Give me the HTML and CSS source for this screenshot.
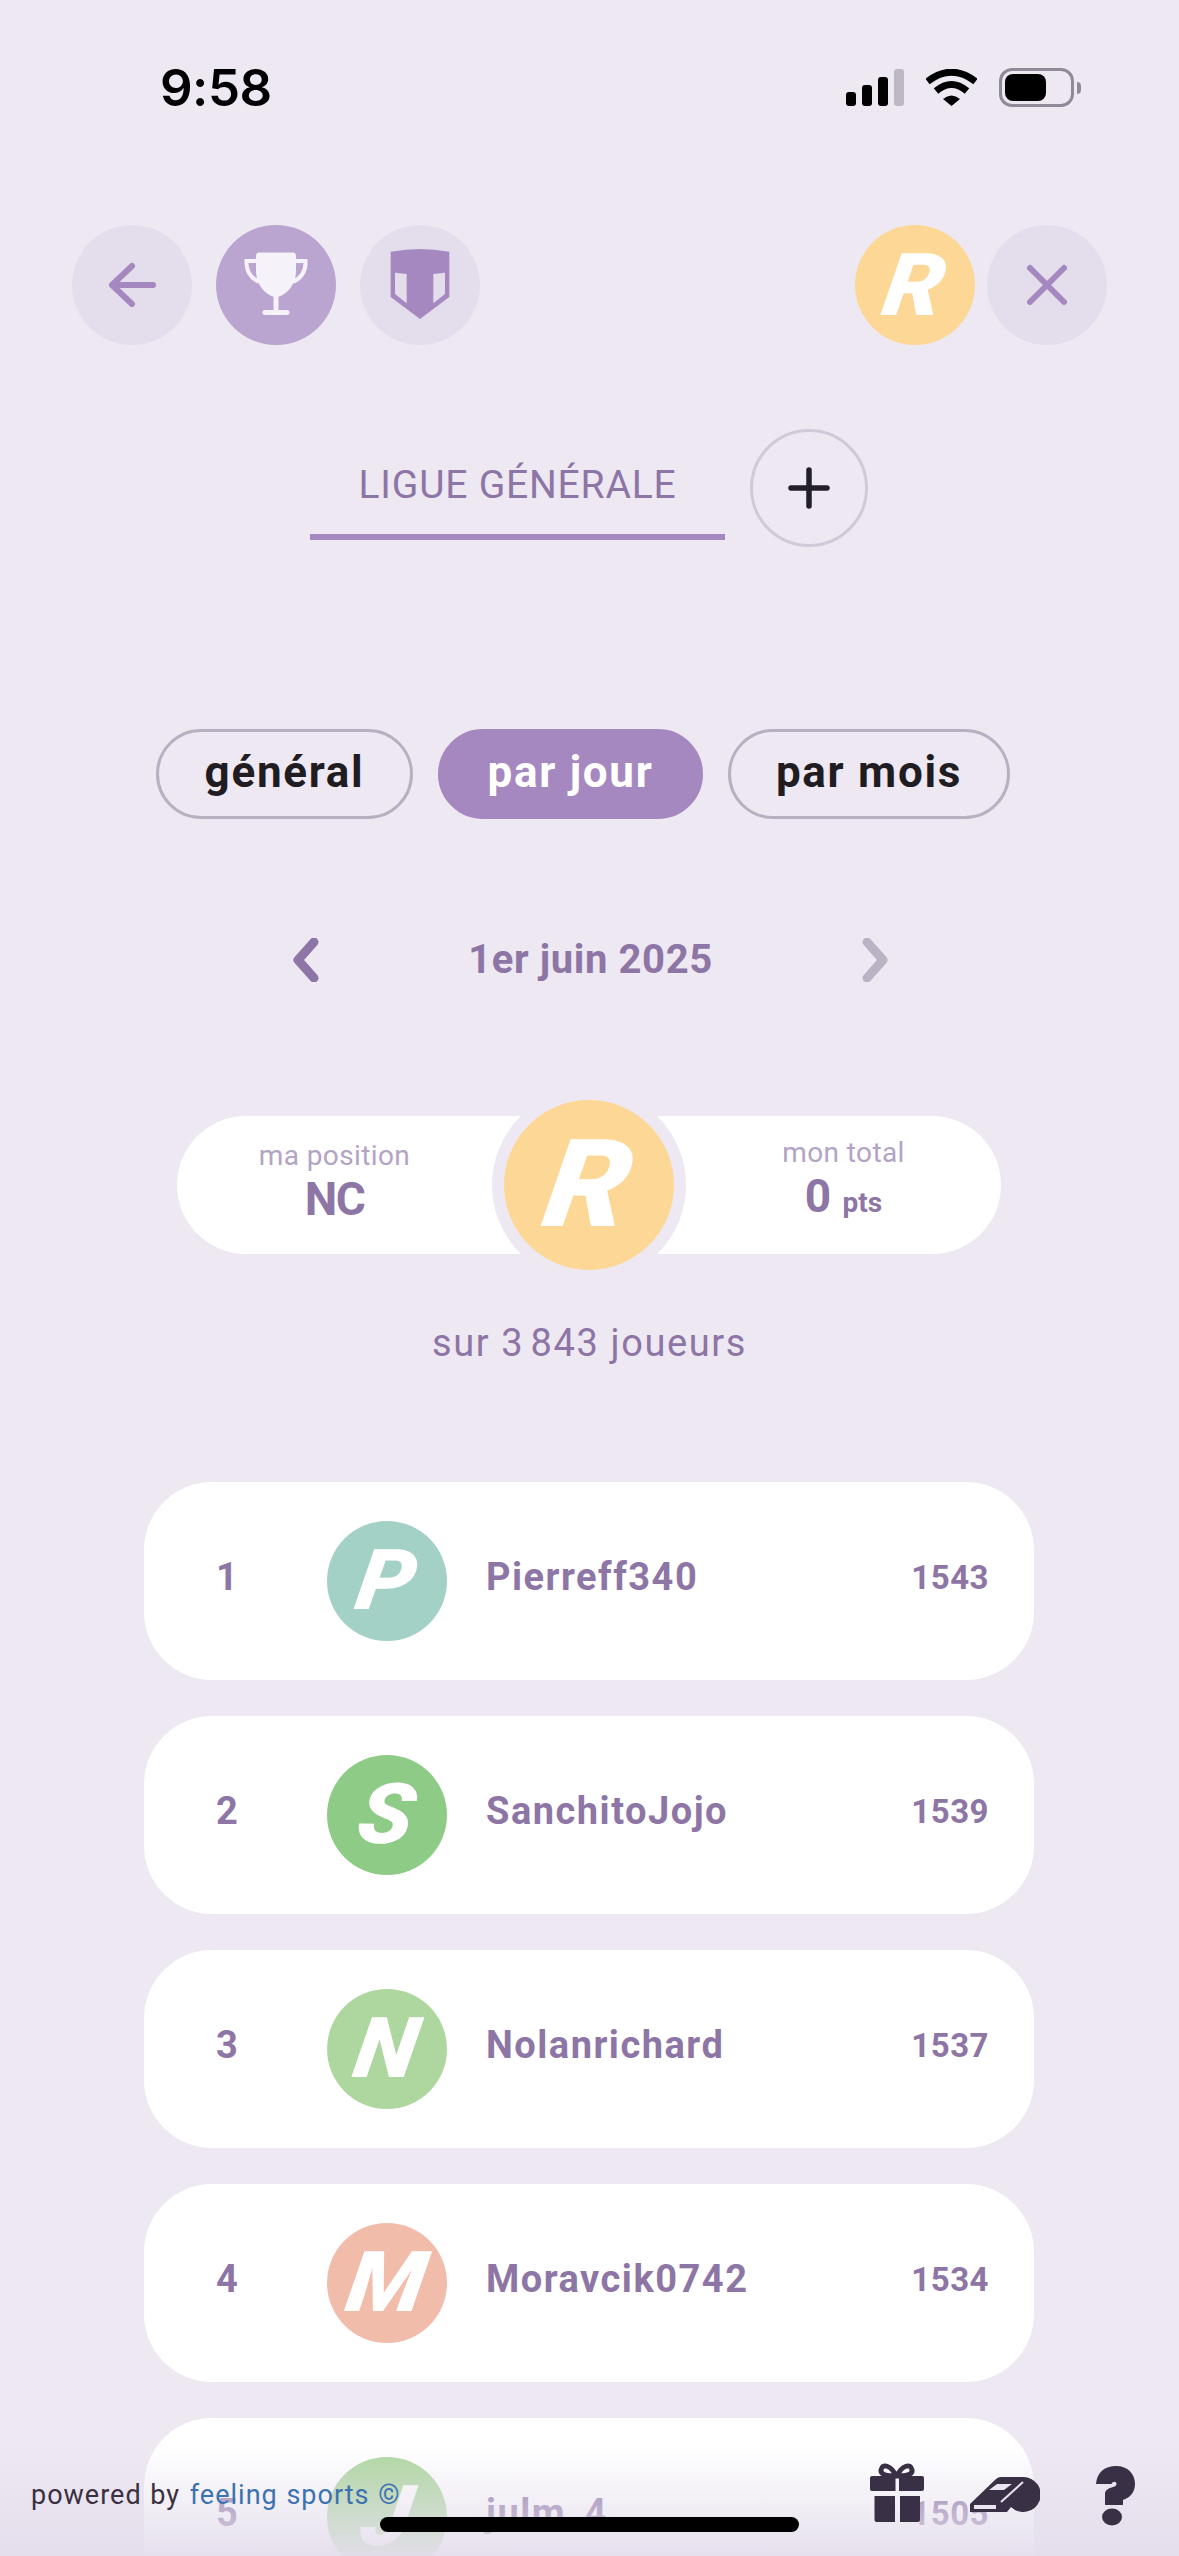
FILE: index.html
```html
<!DOCTYPE html>
<html lang="fr">
<head>
<meta charset="utf-8">
<title>Ligue générale</title>
<link rel="stylesheet" href="styles.css">
</head>
<body>
<div class="page">
  <header class="status">
    <span class="time">9:58</span>
    <div class="status-icons">
      <div class="signal"><i class="b1"></i><i class="b2"></i><i class="b3"></i><i class="b4"></i></div>
      <svg class="wifi" viewBox="0 0 51 37" width="51" height="37"><path d="M1.5 12.5Q25.5 -6 49.5 12.5" fill="none" stroke="#000" stroke-width="7"/><path d="M10 22Q25.5 9 41 22" fill="none" stroke="#000" stroke-width="7"/><path d="M25.5 37L17 30Q25.5 23 34 30Z" fill="#000"/></svg>
      <div class="battery"><div class="battery-body"><div class="battery-fill"></div></div><div class="battery-nub"></div></div>
    </div>
  </header>

  <nav class="nav">
    <div class="round">
      <svg viewBox="0 0 120 120" width="120" height="120"><path d="M81 60H40M60 41L40 60L60 79" fill="none" stroke="#a688c0" stroke-width="6" stroke-linecap="round" stroke-linejoin="round"/></svg>
    </div>
    <div class="round round-on">
      <svg viewBox="0 0 120 120" width="120" height="120"><path d="M40 31Q40 27.5 43 27.5H77Q80 27.5 80 31V46C80 60 70 71 60 72C50 71 40 60 40 46Z" fill="#f6f2fa"/><path d="M42 36H30.5C30 45 33 52 43 57M78 36H89.5C90 45 87 52 77 57" fill="none" stroke="#f6f2fa" stroke-width="4"/><path d="M57.5 70H62.5V85H71Q73.5 85 73.5 87.5T71 90H49Q46.5 90 46.5 87.5T49 85H57.5Z" fill="#f6f2fa"/></svg>
    </div>
    <div class="round">
      <svg viewBox="0 0 120 120" width="120" height="120"><path d="M30.7 26.7Q46 24 60 24T89.3 26.7V72L60 94L30.7 72Z" fill="#a688c0"/><path d="M35 47.7L46.7 49V78.3L35 69ZM85 47.7L73.3 49V78.3L85 69Z" fill="#e4deec"/></svg>
    </div>
    <div class="nav-space"></div>
    <div class="round round-me"><span class="logo logo-s">R</span></div>
    <div class="round">
      <svg viewBox="0 0 120 120" width="120" height="120"><path d="M43 43L77 77M77 43L43 77" fill="none" stroke="#a688c0" stroke-width="6" stroke-linecap="round"/></svg>
    </div>
  </nav>

  <section class="league">
    <div class="tab">LIGUE GÉNÉRALE</div>
    <div class="plus"><svg viewBox="0 0 42 42" width="42" height="42"><path d="M21 3V39M3 21H39" fill="none" stroke="#231f28" stroke-width="5.5" stroke-linecap="round"/></svg></div>
  </section>

  <section class="pills">
    <div class="pill pill-a">général</div>
    <div class="pill pill-b pill-on">par jour</div>
    <div class="pill pill-c">par mois</div>
  </section>

  <section class="date">
    <svg viewBox="0 0 28 44" width="28" height="44"><path d="M22 4L6 22L22 40" fill="none" stroke="#8d75a5" stroke-width="9" stroke-linecap="round" stroke-linejoin="round"/></svg>
    <span class="date-text">1er juin 2025</span>
    <svg viewBox="0 0 28 44" width="28" height="44"><path d="M6 4L22 22L6 40" fill="none" stroke="#bab3c4" stroke-width="9" stroke-linecap="round" stroke-linejoin="round"/></svg>
  </section>

  <section class="stat">
    <div class="stat-col">
      <span class="stat-label">ma position</span>
      <span class="stat-value stat-nc">NC</span>
    </div>
    <div class="stat-ring"><span class="logo logo-l">R</span></div>
    <div class="stat-col">
      <span class="stat-label">mon total</span>
      <span class="stat-value">0 <small class="stat-unit">pts</small></span>
    </div>
  </section>

  <p class="total">sur 3&#8239;843 joueurs</p>

  <section class="rows">
    <article class="row"><span class="rank">1</span><div class="avatar c-teal"><span class="logo logo-m">P</span></div><span class="name">Pierreff340</span><span class="score">1543</span></article>
    <article class="row"><span class="rank">2</span><div class="avatar c-green"><span class="logo logo-m">S</span></div><span class="name">SanchitoJojo</span><span class="score">1539</span></article>
    <article class="row"><span class="rank">3</span><div class="avatar c-lime"><span class="logo logo-m">N</span></div><span class="name">Nolanrichard</span><span class="score">1537</span></article>
    <article class="row"><span class="rank">4</span><div class="avatar c-salmon"><span class="logo logo-m">M</span></div><span class="name">Moravcik0742</span><span class="score">1534</span></article>
    <article class="row"><span class="rank">5</span><div class="avatar c-lime"><span class="logo logo-m">J</span></div><span class="name">julm_4</span><span class="score">1505</span></article>
  </section>
</div>

<footer class="footer">
  <div class="powered">powered by <span class="brand">feeling sports ©</span></div>
  <div class="foot-icons">
    <svg class="gift" viewBox="0 0 54 59" width="54" height="59"><path d="M26 13C21 2 12 0 11 7C10.500 12 17 13 26 13C35 13 43 12 42 7C41 0 32 2 27 13" fill="none" stroke="#3a3045" stroke-width="5"/><path d="M2 13H25.500V28H2Q0 28 0 26V15Q0 13 2 13ZM29 13H52Q54 13 54 15V26Q54 28 52 28H29ZM4.500 33H25V59H6.500Q4.500 59 4.500 57ZM30 33H50V57Q50 59 48 59H30Z" fill="#3a3045"/></svg>
    <svg class="whistle" viewBox="0 0 70 35" width="70" height="35"><path d="M0 27L26 2Q28 0 31 0H53A17.500 17.500 0 1 1 41 30L37 35H0Z" fill="#3a3045"/><path d="M19 13L27 7H42L34 13Z" fill="#eae4f0"/><path d="M31 25L53 5" stroke="#eae4f0" stroke-width="2"/><path d="M4 28H26V32H4Z" fill="#eae4f0"/></svg>
    <svg class="question" viewBox="0 0 39 60" width="39" height="60"><path d="M0 18C1 6 9 0 20 0C32 0 39 8 39 18C39 27 33 32 27 34V39H9V28C9 24 13 22 17 21C19 20.500 20.500 19.500 20.500 18C20.500 16 18 15 16.500 16.500L15.500 18Z" fill="#3a3045"/><ellipse cx="16" cy="51" rx="10" ry="8.500" fill="#3a3045"/></svg>
  </div>
  <div class="home"></div>
</footer>
</body>
</html>
```
FILE: styles.css
```css
* { box-sizing: border-box; }
html, body { margin: 0; padding: 0; }
body {
  width: 1179px;
  height: 2556px;
  overflow: hidden;
  position: relative;
  background: #eee8f3;
  font-family: Roboto, "Noto Sans", sans-serif;
  color: #8d75a5;
}
.page { display: flex; flex-direction: column; height: 2556px; overflow: hidden; }

.status { height: 225px; flex: none; display: flex; justify-content: space-between; align-items: flex-start; padding: 69px 98px 0 160px; }
.time { font-family: Inter, sans-serif; font-weight: 600; font-size: 51px; line-height: 38px; color: #000; letter-spacing: -0.5px; }
.status-icons { display: flex; align-items: flex-start; }
.signal { display: flex; align-items: flex-end; gap: 6px; height: 37px; margin: 0 22px 0 0; }
.signal i { display: block; width: 10px; border-radius: 3px; background: #000; }
.signal .b1 { height: 14px; }
.signal .b2 { height: 21px; }
.signal .b3 { height: 29px; }
.signal .b4 { height: 37px; background: #bdb8c4; }
.wifi { display: block; margin-right: 22px; }
.battery { display: flex; align-items: center; margin-top: -1px; }
.battery-body { width: 75px; height: 39px; border: 3px solid #908a98; border-radius: 13px; padding: 3px; }
.battery-fill { width: 41px; height: 27px; background: #000; border-radius: 8px; }
.battery-nub { width: 4px; height: 12px; margin-left: 3px; background: #908a98; border-radius: 0 4px 4px 0; }

.nav { height: 120px; flex: none; display: flex; padding: 0 72px; gap: 24px; }
.nav-space { flex: 1; }
.round { width: 120px; height: 120px; border-radius: 50%; background: #e4deec; display: flex; align-items: center; justify-content: center; flex: none; }
.round svg { display: block; }
.round-on { background: #b9a5cf; }
.round-me { background: #fdd796; margin-right: -12px; }

.logo { font-family: Roboto, sans-serif; font-weight: 900; font-style: italic; color: #fff; line-height: 1; display: block; transform: skewX(-9deg) scaleX(1.08); }
.logo-s { font-size: 87px; }
.logo-m { font-size: 84px; }
.logo-l { font-size: 122px; }

.league { flex: none; margin-top: 84px; height: 119px; display: flex; align-items: flex-start; padding-left: 310px; gap: 25px; }
.tab { width: 415px; height: 111px; border-bottom: 6px solid #a688c0; text-align: center; font-size: 39px; line-height: 46px; padding-top: 33px; color: #8d75a5; letter-spacing: 0.8px; }
.plus { width: 118px; height: 118px; border-radius: 50%; border: 3px solid #d0cad8; display: flex; align-items: center; justify-content: center; }

.pills { flex: none; margin-top: 181px; height: 90px; display: flex; padding-left: 156px; gap: 25px; }
.pill { height: 90px; border-radius: 45px; border: 3px solid #b8b0c0; display: flex; align-items: center; justify-content: center; font-weight: 700; font-size: 44px; letter-spacing: 1.7px; color: #1f1c22; padding-bottom: 4px; }
.pill-a { width: 257px; }
.pill-b { width: 265px; }
.pill-c { width: 282px; }
.pill-on { background: #a688c0; border-color: #a688c0; color: #fff; }

.date { flex: none; margin: 119px 0 0 292px; width: 597px; height: 44px; display: flex; justify-content: space-between; align-items: center; }
.date svg { display: block; }
.date-text { font-weight: 700; font-size: 40px; line-height: 44px; letter-spacing: 0.6px; color: #8d75a5; }

.stat { flex: none; margin: 134px 0 0 177px; width: 824px; height: 138px; background: #fff; border-radius: 69px; display: grid; grid-template-columns: 1fr 194px 1fr; grid-template-rows: 138px; align-items: center; }
.stat-col { display: flex; flex-direction: column; align-items: center; margin-top: -3px; }
.stat-label { font-size: 28px; line-height: 31px; letter-spacing: 0.4px; color: #b3a3c4; }
.stat-value { font-weight: 700; font-size: 46px; line-height: 57px; color: #8d75a5; }
.stat-nc { letter-spacing: -1.5px; }
.stat-unit { font-size: 28px; }
.stat-ring { width: 194px; height: 194px; border: 12px solid #eee8f3; border-radius: 50%; background: #fdd796; display: flex; align-items: center; justify-content: center; }

.total { flex: none; margin: 64px 0 0; height: 50px; text-align: center; font-size: 38px; line-height: 50px; letter-spacing: 1.6px; color: #8d75a5; }

.rows { flex: none; margin: 114px 0 0 144px; width: 890px; display: flex; flex-direction: column; gap: 36px; }
.row { height: 198px; flex: none; background: #fff; border-radius: 68px; display: flex; align-items: center; padding-right: 45px; }
.rank { width: 166px; margin-right: 17px; text-align: center; font-weight: 700; font-size: 38px; color: #8d75a5; padding-bottom: 8px; }
.avatar { width: 120px; height: 120px; flex: none; border-radius: 50%; display: flex; align-items: center; justify-content: center; }
.c-teal { background: #a3d1c5; }
.c-green { background: #8ecb86; }
.c-lime { background: #aed79f; }
.c-salmon { background: #f2bcab; }
.name { margin-left: 39px; flex: 1; font-weight: 700; font-size: 38px; letter-spacing: 1.5px; color: #8d75a5; padding-bottom: 8px; }
.score { font-weight: 700; font-size: 33px; letter-spacing: 0.5px; color: #8d75a5; padding-bottom: 8px; }

.footer { position: absolute; left: 0; right: 0; bottom: 0; height: 130px; background: linear-gradient(rgba(238,232,243,0) 15%, rgba(228,222,236,.94)); }
.powered { position: absolute; left: 31px; top: 53px; font-size: 27px; line-height: 32px; letter-spacing: 1px; word-spacing: 1px; color: #3a3040; }
.brand { color: #3d72b0; margin-left: 1px; }
.foot-icons { position: absolute; inset: 0; }
.gift { position: absolute; left: 870px; top: 37px; }
.whistle { position: absolute; left: 970px; top: 51px; }
.question { position: absolute; left: 1096px; top: 40px; }
.home { position: absolute; left: 380px; top: 91px; width: 419px; height: 15px; border-radius: 8px; background: #000; }
```
